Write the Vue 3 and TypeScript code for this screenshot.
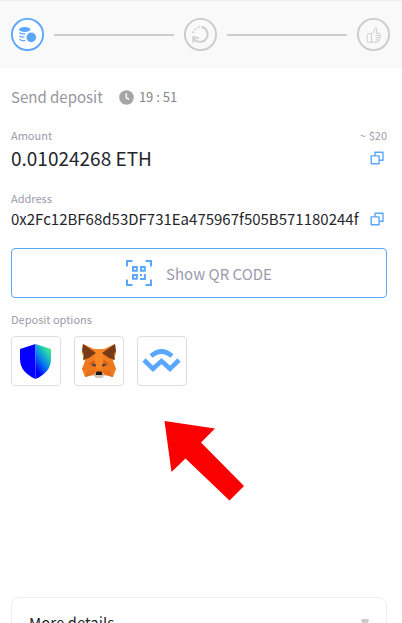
<script setup lang="ts">
import { ref } from 'vue'

const amount = ref('0.01024268 ETH')
const address = ref('0x2Fc12BF68d53DF731Ea475967f505B571180244f')
const qrOpen = ref(false)

function copy(value: string) {
  navigator.clipboard?.writeText(value)
}
</script>

<template>
  <div class="page">
    <header class="steps">
      <svg class="step active" viewBox="0 0 33 33" aria-hidden="true">
        <circle cx="16.5" cy="16.5" r="15.6" fill="#fff" stroke="currentColor" stroke-width="1.9" />
        <ellipse cx="13.7" cy="11.5" rx="5.6" ry="2.5" fill="currentColor" />
        <path d="M8.4 14.6c.7 1 3.1 1.500 6 1.300M8.400 17.800c.7 1 2.800 1.500 5 1.300M8.400 21c.7 1.300 3.200 1.900 5.900 1.600" fill="none" stroke="currentColor" stroke-width="1.3" />
        <circle cx="20.3" cy="19.4" r="5.6" fill="#fff" />
        <circle cx="20.3" cy="19.4" r="4.8" fill="currentColor" />
      </svg>
      <span class="line"></span>
      <svg class="step" viewBox="0 0 33 33" aria-hidden="true">
        <circle cx="16.5" cy="16.5" r="15.6" fill="none" stroke="currentColor" stroke-width="1.9" />
        <path d="M17.5 9a7.500 7.500 0 1 1-7.300 12" fill="none" stroke="currentColor" stroke-width="1.8" />
        <path d="M9.200 24.500v-5.600l5.600 1.200" fill="none" stroke="currentColor" stroke-width="1.6" />
        <g fill="currentColor"><circle cx="14.7" cy="9.200" r="1" /><circle cx="11.4" cy="11.2" r="1" /><circle cx="9.2" cy="14.3" r="1" /></g>
      </svg>
      <span class="line"></span>
      <svg class="step" viewBox="0 0 33 33" aria-hidden="true">
        <circle cx="16.5" cy="16.5" r="15.6" fill="none" stroke="currentColor" stroke-width="1.9" />
        <g fill="none" stroke="currentColor" stroke-width="1" stroke-linejoin="round">
          <path d="M14.500 15.600h-2.700q-1.600 0-1.600 2v4.500q0 2.200 1.600 2.200h2.700z" />
          <path d="M14.500 16l2.400-2.300 1-3.100q.6-1.400 1.600-.4 1 1.200-.5 4.900h2.600q1.700.3 1.400 1.900 .8 1 0 2.400.3 1.400-.7 2.200 0 2-1.900 2.500h-4.200l-1.700-1" />
          <path d="M18.500 17.300h4.200M18.800 19.600h4M18.500 21.900h3.600" />
        </g>
      </svg>
    </header>

    <main class="content">
      <div class="title-row">
        <h1>Send deposit</h1>
        <svg class="clock" viewBox="0 0 15 15" aria-hidden="true">
          <circle cx="7.5" cy="7.5" r="7.3" fill="#a5a5a5" />
          <path d="M7.300 3.200v4.600l2.800 1.600" fill="none" stroke="#fff" stroke-width="1.4" />
        </svg>
        <time>19 : 51</time>
      </div>

      <section class="field amount">
        <div class="row label"><span>Amount</span><span>~ $20</span></div>
        <div class="row">
          <strong>{{ amount }}</strong>
          <button class="copy" type="button" aria-label="Copy amount" @click="copy(amount)">
            <svg viewBox="0 0 14 14"><path d="M5 4.500V1.200h8v8H9.500M1.200 4.900h7.900v7.900H1.200z" /></svg>
          </button>
        </div>
      </section>

      <section class="field address">
        <div class="row label"><span>Address</span></div>
        <div class="row">
          <strong>{{ address }}</strong>
          <button class="copy" type="button" aria-label="Copy address" @click="copy(address)">
            <svg viewBox="0 0 14 14"><path d="M5 4.500V1.200h8v8H9.500M1.200 4.900h7.900v7.900H1.200z" /></svg>
          </button>
        </div>
      </section>

      <button class="qr" type="button" :aria-pressed="qrOpen" @click="qrOpen = !qrOpen">
        <svg viewBox="0 0 26 26" aria-hidden="true">
          <g fill="none" stroke="#5aa7ff" stroke-width="2">
            <path d="M1 6.500V1h5.500M19.500 1H25v5.500M25 19.500V25h-5.500M6.500 25H1v-5.500" />
            <path d="M7 7h3.800v3.800H7zM15 7h3.800v3.800H15zM7 15h3.800v3.800H7zM14 18.900h4.900V14" />
          </g>
          <path d="M14 14h2v2h-2z" fill="#5aa7ff" />
        </svg>
        <span>Show QR CODE</span>
      </button>

      <p class="label options-label">Deposit options</p>
      <div class="options">
        <button type="button" aria-label="Trust Wallet">
          <svg viewBox="0 0 48 48">
            <defs>
              <linearGradient id="shield" x1="0.85" y1="0" x2="0.25" y2="1">
                <stop offset="0.05" stop-color="#48f08c" />
                <stop offset="0.28" stop-color="#20c6b8" />
                <stop offset="0.55" stop-color="#087ef0" />
                <stop offset="0.9" stop-color="#0000ff" />
              </linearGradient>
            </defs>
            <path d="M23.500 7L8 12v10c0 10 6.500 16 15.500 20z" fill="#0500ff" />
            <path d="M23.500 7L39 12v10c0 10-6.500 16-15.500 20z" fill="url(#shield)" />
          </svg>
        </button>
        <button type="button" aria-label="MetaMask">
          <svg viewBox="0 0 48 48">
            <path d="M8 7l11 5h10l11-5 1 9-3 8 3 8-3 8-8-2-4 3h-4l-4-3-8 2-3-8 3-8-3-8z" fill="#f37b20" />
            <path d="M19 12h10l-2 20h-6z" fill="#f78624" />
            <path d="M8 7l13 9-7 5-6 2 1-6-2-3zM40 7l-13 9 7 5 6 2-1-6 2-3z" fill="#763c1a" />
            <path d="M7 33l3-8 9 1 2 9-8-2zM41 33l-3-8-9 1-2 9 8-2z" fill="#ee781e" />
            <path d="M14 27l5-4 2 7zM34 27l-5-4-2 7z" fill="#c96126" />
            <path d="M16 28l4-1 1 2.500zM32 28l-4-1-1 2.500z" fill="#26394c" />
            <path d="M10 40l7-2 3-4-7-1zM38 40l-7-2-3-4 7-1z" fill="#e56f1f" />
            <path d="M18.500 38l2-2h7l2 2-2.500 3h-6z" fill="#cfc4bb" />
            <path d="M21.500 34.500h5l1 3.500h-7z" fill="#161616" />
          </svg>
        </button>
        <button type="button" aria-label="WalletConnect">
          <svg viewBox="0 0 48 48" fill="none" stroke="#5aa7ff" stroke-width="4.6" stroke-linejoin="miter">
            <path d="M13 19q10.500-9 21 0" />
            <path d="M6 23l9 8.800 8.500-7.800 8.500 7.800L41 23" />
          </svg>
        </button>
      </div>

      <svg class="arrow" viewBox="-4 0 90 80" aria-hidden="true">
        <path d="M6.500 0L57 7.500 43 21.500l43 43.500L71.500 79.500 27.500 37.500 13.500 51z" fill="#fb0000" />
      </svg>

      <details class="more">
        <summary>
          <span>More details</span>
          <svg viewBox="0 0 8 8" aria-hidden="true"><path d="M0 1.500Q0 0 1.500 0h5Q8 0 8 1.500L4.500 7h-1z" fill="#ccc" /></svg>
        </summary>
      </details>
    </main>
  </div>
</template>

<style>
body {
  margin: 0;
  background: #fff;
}
</style>

<style scoped>
.page {
  box-sizing: border-box;
  height: 100vh;
  overflow: hidden;
  font-family: "Noto Sans CJK SC", "Noto Sans", sans-serif;
  color: #25262b;
}

button {
  font: inherit;
  padding: 0;
  background: #fff;
  cursor: pointer;
}

svg {
  display: block;
  flex: none;
}

.steps {
  display: flex;
  align-items: center;
  gap: 10px;
  box-sizing: border-box;
  height: 68px;
  padding: 0 12px 0 11px;
  background: #f9f9f9;
  border-top: 1px solid #eee;
}

.step {
  width: 33px;
  height: 33px;
  color: #ccc;
}

.step.active {
  color: #5aa7ff;
}

.line {
  flex: 1;
  height: 2px;
  background: #ccc;
}

.content {
  padding: 17px 15px 0 11px;
}

.title-row {
  display: flex;
  align-items: center;
  height: 24px;
}

h1 {
  margin: 0 16px 0 0;
  font-size: 15px;
  font-weight: 400;
  line-height: 24px;
  color: #9596a0;
}

.clock {
  width: 15px;
  height: 15px;
  margin-right: 5px;
}

time {
  font-size: 13px;
  line-height: 24px;
  color: #85868a;
}

.row {
  display: flex;
  align-items: center;
  justify-content: space-between;
}

.label {
  font-size: 11px;
  line-height: 18px;
  color: #9b9bab;
}

strong {
  font-weight: 400;
  line-height: 24px;
}

.amount {
  margin-top: 17px;
}

.amount strong {
  font-size: 19px;
  line-height: 28px;
}

.address {
  margin-top: 17px;
}

.address strong {
  font-size: 15px;
}

.copy {
  margin-right: 3px;
  border: 0;
}

.copy svg {
  width: 14px;
  height: 14px;
  fill: #fff;
  stroke: #5aa7ff;
  stroke-width: 1.4;
  stroke-linejoin: round;
}

.qr {
  display: flex;
  align-items: center;
  justify-content: center;
  gap: 14px;
  width: 100%;
  height: 50px;
  margin-top: 17px;
  border: 1px solid #5aa7ff;
  border-radius: 4px;
  font-size: 15px;
  color: #9b9bab;
}

.qr svg {
  width: 26px;
  height: 26px;
}

.options-label {
  margin: 12px 0 8px;
}

.options {
  display: flex;
  gap: 13px;
}

.options button {
  box-sizing: border-box;
  width: 50px;
  height: 50px;
  border: 1px solid #ddd;
  border-radius: 4px;
}

.options svg {
  width: 48px;
  height: 48px;
}

.arrow {
  width: 90px;
  height: 80px;
  margin: 35px auto 96px;
}

.more {
  border: 1px solid #eee;
  border-radius: 8px;
}

summary {
  display: flex;
  align-items: center;
  justify-content: space-between;
  padding: 13px 17px;
  font-size: 15px;
  line-height: 24px;
  list-style: none;
  cursor: pointer;
}

summary svg {
  width: 8px;
  height: 8px;
}
</style>
